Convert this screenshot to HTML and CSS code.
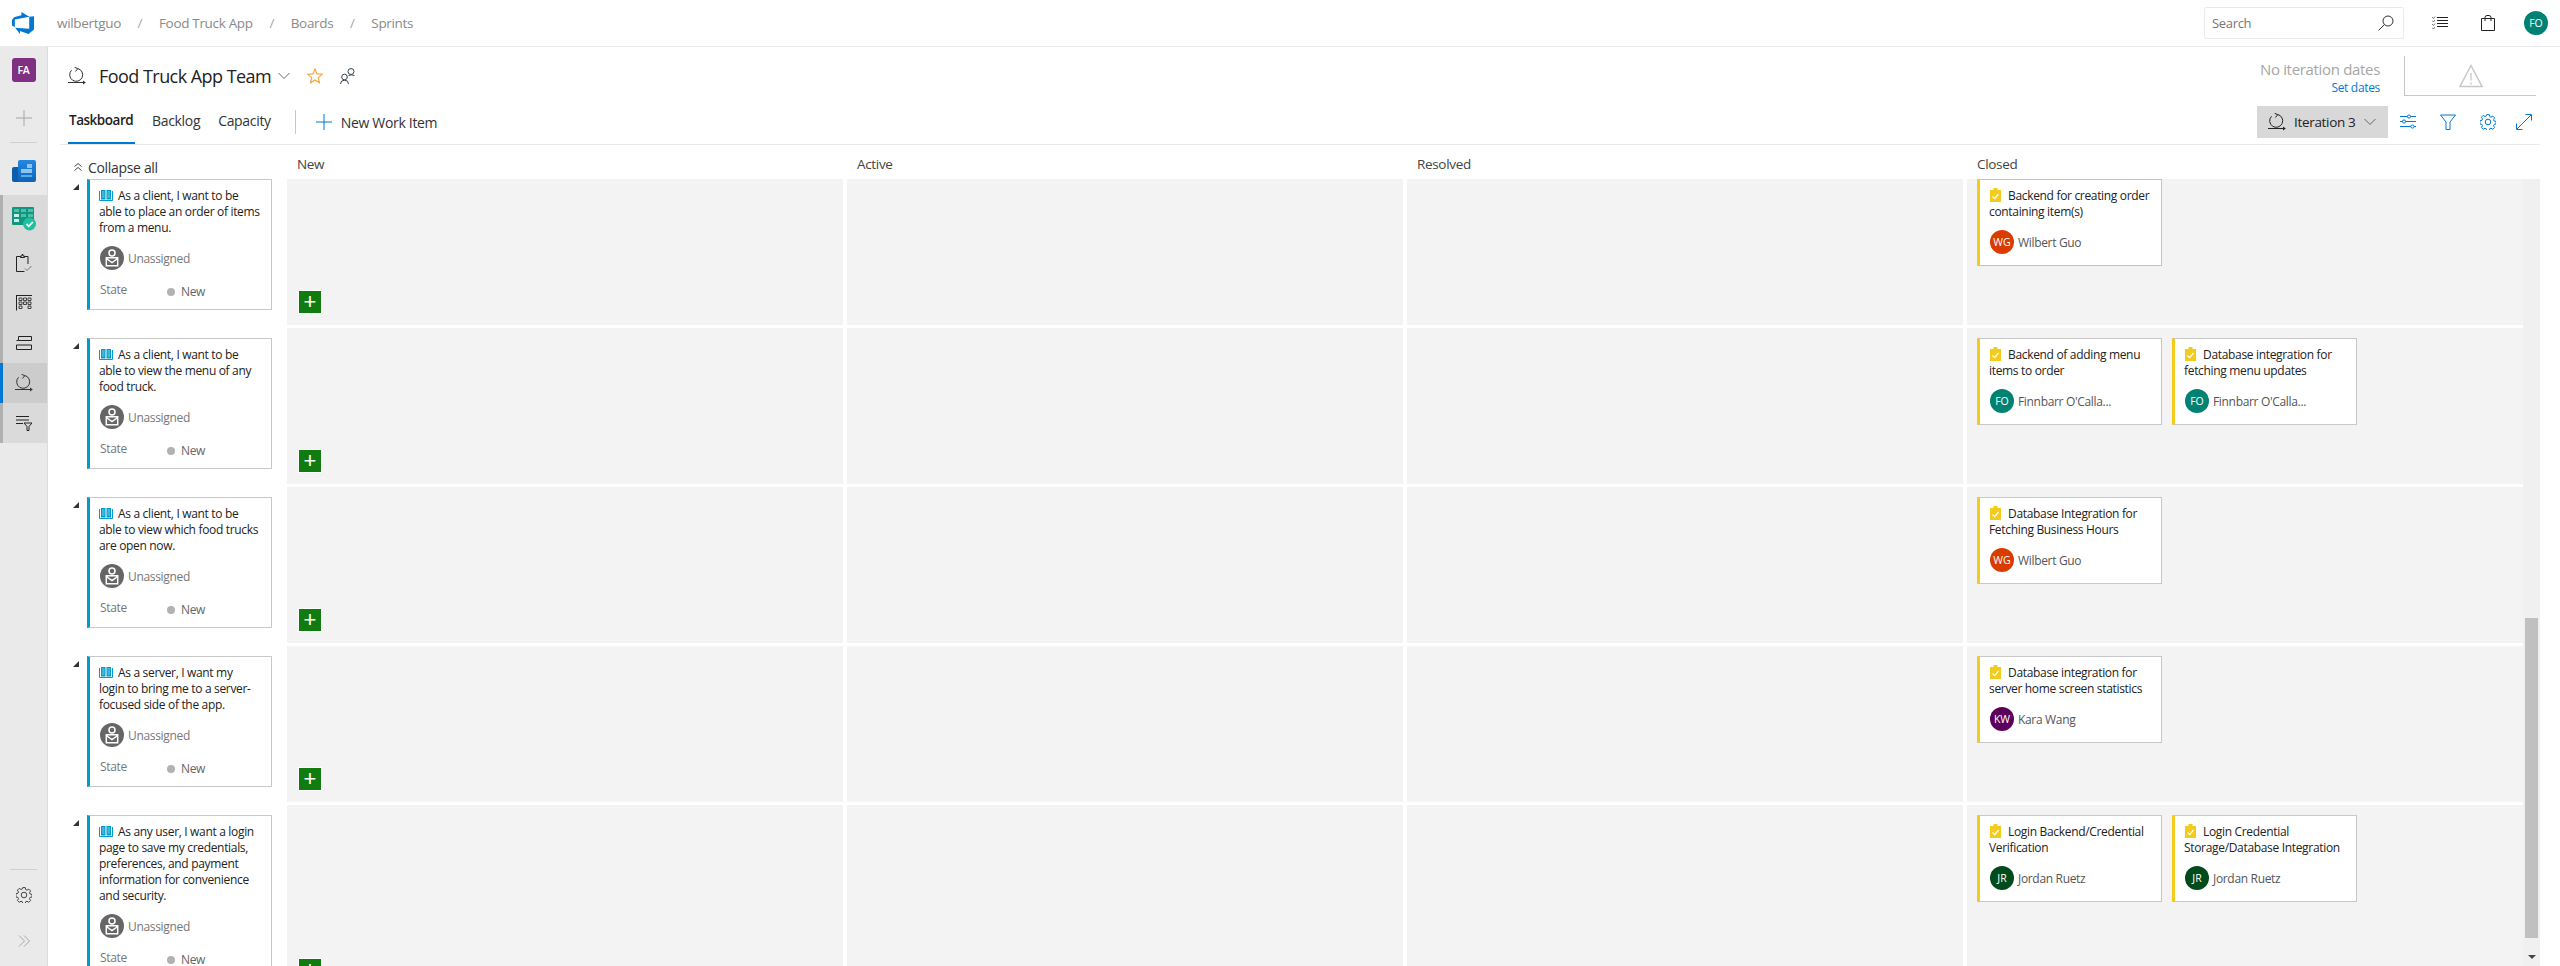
FILE: index.html
```html
<!DOCTYPE html>
<html lang="en">
<head>
  <meta charset="UTF-8">
  <title>Sprints - Boards</title>
  <link rel="stylesheet" href="styles.css">
</head>
<body>
  <svg class="sprites" width="0" height="0">
    <symbol id="i-cycle" viewBox="0 0 18 18">
      <path d="M3.500 3.300A6.500 6.500 0 1 0 9.800 1.500" fill="none" stroke="currentColor"/>
      <path d="M6.600 .3 9.800 1.700 7.400 4.500M0 15.500h16" fill="none" stroke="currentColor"/>
      <path d="M15 13.500 17.800 15.500 15 17.500z" fill="currentColor"/>
    </symbol>
    <symbol id="i-chevron" viewBox="0 0 12 8">
      <path d="M.5 1 6 6.500 11.500 1" fill="none" stroke="currentColor"/>
    </symbol>
    <symbol id="i-gear" viewBox="0 0 16 16">
      <path d="M6.700 .6h2.600l.4 2 1.300.6 1.800-1.100 1.800 1.800-1.100 1.800.6 1.300 2 .4v2.600l-2 .4-.6 1.300 1.100 1.800-1.800 1.800-1.800-1.100-1.300.6-.4 2H6.700l-.4-2-1.300-.6-1.800 1.100-1.800-1.800 1.100-1.800-.6-1.300-2-.4V6.700l2-.4.6-1.300-1.100-1.800 1.800-1.800 1.800 1.100 1.300-.6z" fill="none" stroke="currentColor" stroke-linejoin="round"/>
      <circle cx="8" cy="8" r="2.800" fill="none" stroke="currentColor"/>
    </symbol>
    <symbol id="i-book" viewBox="0 0 14 11">
      <path d="M.5 1v9.500h13V1" fill="none" stroke="#009ccc"/>
      <path d="M2 0h4.500v9.500H2zM7.500 0H12v9.500H7.500z" fill="#009ccc"/>
      <path d="M3 1h2.500v7H3zM8.500 1H11v7H8.500z" fill="#3fb5da"/>
    </symbol>
    <symbol id="i-task" viewBox="0 0 11 14">
      <path d="M0 2h3.500V0h4v2H11v12H0z" fill="#f2cb1d"/>
      <path d="M2.500 8.500 4.700 10.700 8.500 6" fill="none" stroke="#fff" stroke-width="1.200"/>
    </symbol>
    <symbol id="i-nobody" viewBox="0 0 24 24">
      <circle cx="12" cy="12" r="12" fill="#666"/>
      <circle cx="12" cy="7" r="3" fill="none" stroke="#fff" stroke-width="1.500"/>
      <path d="M6.300 11.800h11.400v8H6.300zM6.300 12.500 12 16.500l5.700-4" fill="none" stroke="#fff" stroke-width="1.500"/>
    </symbol>
    <linearGradient id="g-overview" x1="0" y1="0" x2="0" y2="1">
      <stop offset="0" stop-color="#2488e0"/>
      <stop offset="1" stop-color="#0d63b8"/>
    </linearGradient>
  </svg>

  <header class="topbar">
    <svg class="logo" viewBox="1 1 16 16" width="22" height="22">
      <path fill="#0078d4" d="M17 4v9.740l-4 3.280-6.200-2.260V17L3.290 12.410l10.230.8V4.440Zm-3.410.49L7.850 1v2.290L2.460 4.870 1 6.750v4.270l2.060.91V6.450Z"/>
    </svg>
    <nav class="crumbs">
      <span>wilbertguo</span><i>/</i>
      <span>Food Truck App</span><i>/</i>
      <span>Boards</span><i>/</i>
      <span>Sprints</span>
    </nav>
    <div class="searchbox">
      <span>Search</span>
      <svg viewBox="0 0 16 16" width="16" height="16"><circle cx="10" cy="6" r="5" fill="none" stroke="#333"/><path d="M6.500 9.500 .5 15.500" stroke="#333"/></svg>
    </div>
    <svg class="top-icon list-icon" viewBox="0 0 16 16" width="16" height="16">
      <path d="M5 2.500h11M5 5.500h11M5 8.500h11M5 11.500h11" stroke="#222" fill="none"/>
      <path d="M0 2l1.500 1.500L3 1.500M0 5.500l1.500 1.500L3 5M0 9l1.500 1.500L3 8.500M0 12.500 1.500 14 3 12" stroke="#555" fill="none" stroke-width=".8"/>
    </svg>
    <svg class="top-icon bag-icon" viewBox="0 0 14 16" width="14" height="16">
      <path d="M.5 3.500h13v12H.5zM4 6V2.500Q4 .5 6 .5h2Q10 .5 10 2.500V6" fill="none" stroke="#222"/>
    </svg>
    <div class="avatar fo top-avatar">FO</div>
  </header>

  <div class="layout">
    <aside class="sidebar">
      <div class="project">FA</div>
      <svg class="side-plus" viewBox="0 0 16 16" width="16" height="16"><path d="M8 0v16M0 8h16" stroke="#a6a6a6"/></svg>
      <div class="side-rule"></div>
      <svg class="side-overview" viewBox="0 0 24 22" width="24" height="22">
        <path d="M2 7h6v15H2a2 2 0 0 1-2-2V9a2 2 0 0 1 2-2z" fill="#0b5cab"/>
        <path d="M6 2a2 2 0 0 1 2-2h14a2 2 0 0 1 2 2v18a2 2 0 0 1-2 2H6z" fill="url(#g-overview)"/>
        <path d="M15 4h5v4h-5zM9 9h11v4H9z" fill="#8cc4f0"/>
        <path d="M9 15h11v2H9z" fill="#5ea8e6"/>
      </svg>
      <div class="side-group">
        <div class="side-item side-item-first">
          <svg viewBox="0 0 24 24" width="24" height="24">
            <path d="M0 1a1 1 0 0 1 1-1h20a1 1 0 0 1 1 1v17H1a1 1 0 0 1-1-1z" fill="#12967f"/>
            <path d="M2 2h5v3H2zM9 2h5v3H9zM16 2h5v3h-5zM2 7h5v3H2zM9 7h5v3H9zM16 7h5v3h-5z" fill="#4cc0a8"/>
            <path d="M2 7h5v3H2zM2 12h5v3H2z" fill="#c8efe6"/>
            <circle cx="17.500" cy="17" r="6.500" fill="#1fc0a0"/>
            <path d="M14.500 17 16.800 19.300 20.800 15" fill="none" stroke="#fff" stroke-width="1.800"/>
          </svg>
        </div>
        <div class="side-item">
          <svg viewBox="0 0 16 18" width="16" height="18">
            <path d="M4 2.500H.5v15h8M12 10V2.500H8.500M4.500 3.500V2h1.500V.5h1V2h1.500v1.500z" fill="none" stroke="#222"/>
            <path d="M9 14.500 11 16.500 15.500 12" fill="none" stroke="#777"/>
          </svg>
        </div>
        <div class="side-item">
          <svg viewBox="0 0 16 16" width="16" height="16">
            <path d="M.5 0v15.500M0 .5h16" fill="none" stroke="#222"/>
            <path d="M3 3h3v2.500H3zM7.500 3h3v2.500h-3zM12 3h3v2.500h-3zM3 7h3v2.500H3zM7.500 7h3v2.500h-3zM12 7h3v2.500h-3zM3 11h3v2.500H3zM12 11h3v2.500h-3z" fill="none" stroke="#333" stroke-width=".9"/>
          </svg>
        </div>
        <div class="side-item">
          <svg viewBox="0 0 16 14" width="16" height="14">
            <path d="M2.500.5h13v4h-13zM.5 9h15v4.500H.5z" fill="none" stroke="#222"/>
            <path d="M.5 4.500h2" stroke="#222"/>
          </svg>
        </div>
        <div class="side-item side-item-on">
          <svg width="18" height="18"><use href="#i-cycle"/></svg>
        </div>
        <div class="side-item">
          <svg viewBox="0 0 16 16" width="16" height="16">
            <path d="M0 1.500h13M0 5h13M0 8.500h7" fill="none" stroke="#222"/>
            <path d="M8 8h8l-3 3.500V15.500h-2V11.500z" fill="none" stroke="#222"/>
          </svg>
        </div>
      </div>
      <div class="side-bottom">
        <div class="side-rule"></div>
        <svg class="side-gear" width="16" height="16"><use href="#i-gear"/></svg>
        <svg class="side-more" viewBox="0 0 12 12" width="12" height="12"><path d="M1 .5 6.500 6 1 11.500M6 .5 11.500 6 6 11.500" fill="none" stroke="#a6a6a6"/></svg>
      </div>
    </aside>

    <main class="content">
      <div class="head">
        <div class="head-top">
          <div class="title-row">
            <svg class="title-cycle" width="18" height="18"><use href="#i-cycle"/></svg>
            <h1>Food Truck App Team</h1>
            <svg class="title-chevron" width="12" height="8"><use href="#i-chevron"/></svg>
            <svg class="title-star" viewBox="0 0 16 16" width="16" height="16"><path d="M8 1l2 4.900 5.200.4-4 3.400 1.300 5.100L8 12l-4.500 2.800 1.300-5.100-4-3.400L6 5.900z" fill="none" stroke="#f2a33a" stroke-width="1.100"/></svg>
            <svg class="title-people" viewBox="0 0 16 16" width="16" height="16">
              <circle cx="11" cy="3.500" r="3" fill="none" stroke="#3a4450"/>
              <circle cx="4.500" cy="9" r="2.800" fill="none" stroke="#3a4450"/>
              <path d="M.5 16q0-3.800 4-3.800t4 3.800M8.500 7.500q2.500-1.300 6 0" fill="none" stroke="#3a4450"/>
            </svg>
          </div>
          <div class="dates">
            <div class="dates-text">
              <div class="no-dates">No iteration dates</div>
              <a class="set-dates">Set dates</a>
            </div>
            <div class="dates-box">
              <svg viewBox="0 0 24 24" width="24" height="24"><path d="M12 1.500 23 22.500H1z" fill="none" stroke="#c8c8c8" stroke-width="1.500"/><path d="M12 9v7.500M12 18.500v2" stroke="#c8c8c8" stroke-width="1.300"/></svg>
            </div>
          </div>
        </div>
        <div class="head-tabs">
          <a class="tab tab-on">Taskboard</a>
          <a class="tab">Backlog</a>
          <a class="tab">Capacity</a>
          <span class="tab-rule"></span>
          <a class="new-item">
            <svg viewBox="0 0 16 16" width="16" height="16"><path d="M8 0v16M0 8h16" stroke="#0078d4"/></svg>
            New Work Item
          </a>
          <div class="tools">
            <button class="iter-btn">
              <svg width="18" height="18"><use href="#i-cycle"/></svg>
              <span>Iteration 3</span>
              <svg class="iter-chevron" width="12" height="8"><use href="#i-chevron"/></svg>
            </button>
            <svg class="tool" viewBox="0 0 16 16" width="16" height="16"><path d="M0 2.500h16M0 7.500h16M0 12.500h16" stroke="#0078d4"/><circle cx="9" cy="2.500" r="1.600" fill="#fff" stroke="#0078d4"/><circle cx="4" cy="7.500" r="1.600" fill="#fff" stroke="#0078d4"/><circle cx="12.500" cy="12.500" r="1.600" fill="#fff" stroke="#0078d4"/></svg>
            <svg class="tool" viewBox="0 0 16 16" width="16" height="16"><path d="M.5 1h15L10 8v7.500H6V8z" fill="none" stroke="#0078d4"/></svg>
            <svg class="tool" width="16" height="16"><use href="#i-gear"/></svg>
            <svg class="tool tool-last" viewBox="0 0 16 16" width="16" height="16"><path d="M1 15 15 1M9.500 .5h6v6M.5 9.500v6h6" fill="none" stroke="#0078d4"/></svg>
          </div>
        </div>
      </div>

      <div class="col-heads">
        <div class="collapse-all">
          <svg viewBox="0 0 8 8" width="8" height="8"><path d="M.5 3.500 4 .5 7.500 3.500M.5 7.500 4 4.500 7.500 7.500" fill="none" stroke="#444"/></svg>
          Collapse all
        </div>
        <div class="col-name">New</div>
        <div class="col-name">Active</div>
        <div class="col-name">Resolved</div>
        <div class="col-name">Closed</div>
      </div>

      <div class="board">
        <div class="rows">

          <div class="row row-first">
            <div class="story-cell">
              <span class="twisty"></span>
              <div class="card story">
                <p class="card-title"><svg class="wi-book" width="14" height="11"><use href="#i-book"/></svg>As a client, I want to be able to place an order of items from a menu.</p>
                <div class="assignee unassigned"><svg width="24" height="24"><use href="#i-nobody"/></svg>Unassigned</div>
                <div class="state"><span class="state-label">State</span><span class="state-value"><b></b>New</span></div>
              </div>
            </div>
            <div class="cell"><button class="add-btn">+</button></div>
            <div class="cell"></div>
            <div class="cell"></div>
            <div class="cell cell-closed">
              <div class="card task task-selected">
                <p class="card-title"><svg class="wi-task" width="11" height="14"><use href="#i-task"/></svg>Backend for creating order containing item(s)</p>
                <div class="assignee"><span class="avatar wg">WG</span>Wilbert Guo</div>
              </div>
            </div>
          </div>

          <div class="row">
            <div class="story-cell">
              <span class="twisty"></span>
              <div class="card story">
                <p class="card-title"><svg class="wi-book" width="14" height="11"><use href="#i-book"/></svg>As a client, I want to be able to view the menu of any food truck.</p>
                <div class="assignee unassigned"><svg width="24" height="24"><use href="#i-nobody"/></svg>Unassigned</div>
                <div class="state"><span class="state-label">State</span><span class="state-value"><b></b>New</span></div>
              </div>
            </div>
            <div class="cell"><button class="add-btn">+</button></div>
            <div class="cell"></div>
            <div class="cell"></div>
            <div class="cell cell-closed">
              <div class="card task">
                <p class="card-title"><svg class="wi-task" width="11" height="14"><use href="#i-task"/></svg>Backend of adding menu items to order</p>
                <div class="assignee"><span class="avatar fo">FO</span>Finnbarr O'Calla...</div>
              </div>
              <div class="card task">
                <p class="card-title"><svg class="wi-task" width="11" height="14"><use href="#i-task"/></svg>Database integration for fetching menu updates</p>
                <div class="assignee"><span class="avatar fo">FO</span>Finnbarr O'Calla...</div>
              </div>
            </div>
          </div>

          <div class="row">
            <div class="story-cell">
              <span class="twisty"></span>
              <div class="card story">
                <p class="card-title"><svg class="wi-book" width="14" height="11"><use href="#i-book"/></svg>As a client, I want to be able to view which food trucks are open now.</p>
                <div class="assignee unassigned"><svg width="24" height="24"><use href="#i-nobody"/></svg>Unassigned</div>
                <div class="state"><span class="state-label">State</span><span class="state-value"><b></b>New</span></div>
              </div>
            </div>
            <div class="cell"><button class="add-btn">+</button></div>
            <div class="cell"></div>
            <div class="cell"></div>
            <div class="cell cell-closed">
              <div class="card task">
                <p class="card-title"><svg class="wi-task" width="11" height="14"><use href="#i-task"/></svg>Database Integration for Fetching Business Hours</p>
                <div class="assignee"><span class="avatar wg">WG</span>Wilbert Guo</div>
              </div>
            </div>
          </div>

          <div class="row">
            <div class="story-cell">
              <span class="twisty"></span>
              <div class="card story">
                <p class="card-title"><svg class="wi-book" width="14" height="11"><use href="#i-book"/></svg>As a server, I want my<br>login to bring me to a server-focused side of the app.</p>
                <div class="assignee unassigned"><svg width="24" height="24"><use href="#i-nobody"/></svg>Unassigned</div>
                <div class="state"><span class="state-label">State</span><span class="state-value"><b></b>New</span></div>
              </div>
            </div>
            <div class="cell"><button class="add-btn">+</button></div>
            <div class="cell"></div>
            <div class="cell"></div>
            <div class="cell cell-closed">
              <div class="card task">
                <p class="card-title"><svg class="wi-task" width="11" height="14"><use href="#i-task"/></svg>Database integration for server home screen statistics</p>
                <div class="assignee"><span class="avatar kw">KW</span>Kara Wang</div>
              </div>
            </div>
          </div>

          <div class="row row-last">
            <div class="story-cell">
              <span class="twisty"></span>
              <div class="card story">
                <p class="card-title"><svg class="wi-book" width="14" height="11"><use href="#i-book"/></svg>As any user, I want a login page to save my credentials, preferences, and payment information for convenience and security.</p>
                <div class="assignee unassigned"><svg width="24" height="24"><use href="#i-nobody"/></svg>Unassigned</div>
                <div class="state"><span class="state-label">State</span><span class="state-value"><b></b>New</span></div>
              </div>
            </div>
            <div class="cell"><button class="add-btn">+</button></div>
            <div class="cell"></div>
            <div class="cell"></div>
            <div class="cell cell-closed">
              <div class="card task">
                <p class="card-title"><svg class="wi-task" width="11" height="14"><use href="#i-task"/></svg>Login Backend/Credential Verification</p>
                <div class="assignee"><span class="avatar jr">JR</span>Jordan Ruetz</div>
              </div>
              <div class="card task">
                <p class="card-title"><svg class="wi-task" width="11" height="14"><use href="#i-task"/></svg>Login Credential Storage/Database Integration</p>
                <div class="assignee"><span class="avatar jr">JR</span>Jordan Ruetz</div>
              </div>
            </div>
          </div>

        </div>
        <div class="scrollbar">
          <div class="thumb"></div>
          <span class="arrow-down"></span>
        </div>
      </div>
    </main>
  </div>
</body>
</html>
```

FILE: styles.css
```css
* {
  box-sizing: border-box;
}
html, body {
  height: 100%;
}
body {
  margin: 0;
  overflow: hidden;
  display: flex;
  flex-direction: column;
  background: #fff;
  color: #333;
  font-family: "Open Sans", "Noto Sans", sans-serif;
  font-size: 13px;
  letter-spacing: -0.025em;
}
svg {
  display: block;
  flex: none;
}
.sprites {
  position: absolute;
}

/* top bar */
.topbar {
  height: 47px;
  flex: none;
  display: flex;
  align-items: center;
  padding: 0 12px;
  border-bottom: 1px solid #eaeaea;
}
.crumbs {
  display: flex;
  align-items: center;
  margin-left: 23px;
  color: #8a8a8a;
  font-size: 13.5px;
}
.crumbs i {
  width: 38px;
  text-align: center;
  font-style: normal;
  color: #a6a6a6;
}
.searchbox {
  margin-left: auto;
  width: 200px;
  height: 32px;
  display: flex;
  align-items: center;
  justify-content: space-between;
  padding: 0 9px 0 7px;
  border: 1px solid #eaeaea;
  border-radius: 2px;
  color: #767676;
}
.list-icon {
  margin-left: 28px;
}
.bag-icon {
  margin-left: 33px;
}
.avatar {
  width: 24px;
  height: 24px;
  flex: none;
  display: flex;
  align-items: center;
  justify-content: center;
  border-radius: 50%;
  color: #fff;
  font-size: 10.5px;
  letter-spacing: 0;
}
.top-avatar {
  margin-left: 29px;
}
.fo { background: #008272; }
.wg { background: #da3b01; }
.kw { background: #5c005c; }
.jr { background: #004b1c; }

.layout {
  flex: 1;
  min-height: 0;
  display: flex;
}

/* left nav */
.sidebar {
  width: 48px;
  flex: none;
  display: flex;
  flex-direction: column;
  align-items: center;
  background: #eaeaea;
  border-right: 1px solid #dcdcdc;
}
.project {
  width: 24px;
  height: 24px;
  margin-top: 11px;
  display: flex;
  align-items: center;
  justify-content: center;
  border-radius: 3px;
  background: #7f3080;
  color: #fff;
  font-size: 10.5px;
  font-weight: 600;
}
.side-plus {
  margin-top: 28px;
}
.side-rule {
  width: 27px;
  height: 1px;
  background: #d0d0d0;
}
.sidebar > .side-rule {
  margin-top: 16px;
}
.side-overview {
  margin-top: 17px;
}
.side-group {
  width: 100%;
  margin-top: 13px;
  background: #dadada;
}
.side-item {
  height: 40px;
  display: flex;
  align-items: center;
  justify-content: center;
  border-left: 3px solid #b0b0b0;
  padding-right: 3px;
}
.side-item-first {
  height: 48px;
}
.side-item-on {
  background: #cccccc;
  border-left-color: #0078d4;
}
.side-bottom {
  margin-top: auto;
  display: flex;
  flex-direction: column;
  align-items: center;
  padding-bottom: 17px;
  margin-bottom: 2px;
}
.side-gear {
  margin-top: 17px;
  color: #444;
}
.side-more {
  margin-top: 32px;
}

/* page header */
.content {
  flex: 1;
  min-width: 0;
  display: flex;
  flex-direction: column;
  padding-right: 20px;
}
.head {
  flex: none;
  height: 98px;
  margin-left: 12px;
  padding-left: 8px;
  border-bottom: 1px solid #eaeaea;
}
.head-top {
  height: 53px;
  display: flex;
  justify-content: space-between;
}
.title-row {
  display: flex;
  align-items: center;
  height: 26px;
  margin-top: 16px;
}
.title-cycle {
  color: #333;
}
h1 {
  margin: 0 0 0 13px;
  width: 169px;
  font-size: 18px;
  font-weight: 400;
  letter-spacing: -0.03em;
  white-space: nowrap;
  color: #222;
  line-height: 26px;
}
.title-chevron {
  margin-left: 10px;
  color: #666;
}
.title-star {
  margin-left: 17px;
}
.title-people {
  margin-left: 17px;
}
.dates {
  display: flex;
  margin-top: 9px;
  margin-right: 4px;
}
.dates-text {
  text-align: right;
  margin-right: 24px;
}
.no-dates {
  font-size: 15px;
  line-height: 26px;
  color: #a6a6a6;
}
.set-dates {
  display: block;
  font-size: 12px;
  line-height: 16px;
  margin-top: -2px;
  color: #0078d4;
}
.dates-box {
  width: 132px;
  height: 40px;
  display: flex;
  align-items: center;
  justify-content: center;
  border-left: 1px solid #c8c8c8;
  border-bottom: 1px solid #c8c8c8;
}
.head-tabs {
  height: 44px;
  display: flex;
  align-items: center;
  font-size: 14px;
}
.tab {
  height: 44px;
  line-height: 41px;
  margin-right: 16px;
  padding: 0 1px;
  color: #333;
}
.tab-on {
  width: 67px;
  font-size: 13.5px;
  font-weight: 600;
  letter-spacing: -0.035em;
  color: #222;
  border-bottom: 2px solid #0078d4;
}
.tab-rule {
  width: 1px;
  height: 24px;
  margin: 0 20px 0 7px;
  background: #c8c8c8;
}
.new-item {
  display: flex;
  align-items: center;
  gap: 9px;
  font-size: 14px;
  color: #333;
}
.tools {
  margin-left: auto;
  margin-right: 8px;
  display: flex;
  align-items: center;
  gap: 24px;
  color: #0078d4;
}
.tool-last {
  margin-left: -4px;
}
.iter-btn {
  width: 131px;
  height: 32px;
  margin-right: -12px;
  padding: 0 0 0 11px;
  display: flex;
  align-items: center;
  border: none;
  background: #d8d8d8;
  color: #222;
  font: inherit;
  letter-spacing: inherit;
  font-size: 13.5px;
}
.iter-btn span {
  margin-left: 8px;
}
.iter-chevron {
  margin-left: 9px;
  color: #666;
}

/* board */
.col-heads {
  flex: none;
  height: 34px;
  display: grid;
  grid-template-columns: 235px repeat(4, 556px);
  column-gap: 4px;
}
.collapse-all {
  display: flex;
  align-items: center;
  gap: 6px;
  padding: 10px 0 0 26px;
  font-size: 14px;
  color: #333;
}
.col-name {
  padding: 9px 0 0 10px;
  font-size: 13.5px;
  line-height: 20px;
  color: #444;
}
.board {
  flex: 1;
  min-height: 0;
  display: flex;
  overflow: hidden;
}
.rows {
  flex: 1;
  min-width: 0;
}
.row {
  height: 156px;
  margin-bottom: 3px;
  display: grid;
  grid-template-columns: 235px repeat(4, 556px);
  column-gap: 4px;
}
.row-first {
  height: 146px;
}
.row-last {
  height: 188px;
}
.story-cell {
  display: flex;
  align-items: flex-start;
  padding: 10px 0 0 25px;
}
.row-first .story-cell {
  padding-top: 0;
}
.twisty {
  width: 0;
  height: 0;
  margin: 5px 8px 0 0;
  border-style: solid;
  border-width: 0 0 6px 6px;
  border-color: transparent transparent #333 transparent;
}
.cell {
  background: #f3f3f3;
  display: flex;
  align-items: flex-end;
  padding: 0 0 11px 11px;
}
.cell-closed {
  align-items: flex-start;
  gap: 10px;
  padding: 10px 0 0 10px;
}
.row-first .cell-closed {
  padding-top: 0;
}
.add-btn {
  width: 24px;
  height: 24px;
  padding: 0;
  border: 1px solid #fff;
  background: #107c10;
  color: #fff;
  font: 22px/20px "Liberation Sans", sans-serif;
}

/* cards */
.card {
  width: 185px;
  flex: none;
  padding: 8px 9px 0;
  background: #fff;
  border: 1px solid #c8c8c8;
  border-left-width: 3px;
  font-size: 12px;
}
.story {
  height: 131px;
  border-left-color: #009ccc;
}
.row-last .story {
  height: 163px;
}
.task {
  height: 87px;
  padding-right: 5px;
  border-left-color: #f2cb1d;
}
.task-selected {
  border-color: #f2cb1d;
}
.card-title {
  margin: 0;
  line-height: 16px;
  color: #222;
}
.wi-book {
  display: inline-block;
  margin-right: 5px;
  vertical-align: -1px;
}
.wi-task {
  display: inline-block;
  margin: 0 7px 0 1px;
  vertical-align: -2px;
}
.assignee {
  height: 24px;
  margin: 10px 0 0 1px;
  display: flex;
  align-items: center;
  gap: 4px;
  color: #555;
}
.unassigned {
  color: #777;
}
.state {
  display: flex;
  margin: 10px 0 0 1px;
  line-height: 20px;
  color: #777;
}
.state-label {
  width: 67px;
}
.state-value {
  display: flex;
  align-items: center;
  gap: 6px;
  padding-top: 2px;
  color: #666;
}
.state-value b {
  width: 8px;
  height: 8px;
  border-radius: 50%;
  background: #b2b2b2;
}

.scrollbar {
  width: 17px;
  flex: none;
  padding: 439px 2px 0;
  background: #f0f0f0;
}
.thumb {
  height: 320px;
  background: #c0c0c0;
}
.arrow-down {
  display: block;
  width: 0;
  margin: 17px auto 0;
  border-style: solid;
  border-width: 4px 4px 0;
  border-color: #444 transparent transparent;
}
```
